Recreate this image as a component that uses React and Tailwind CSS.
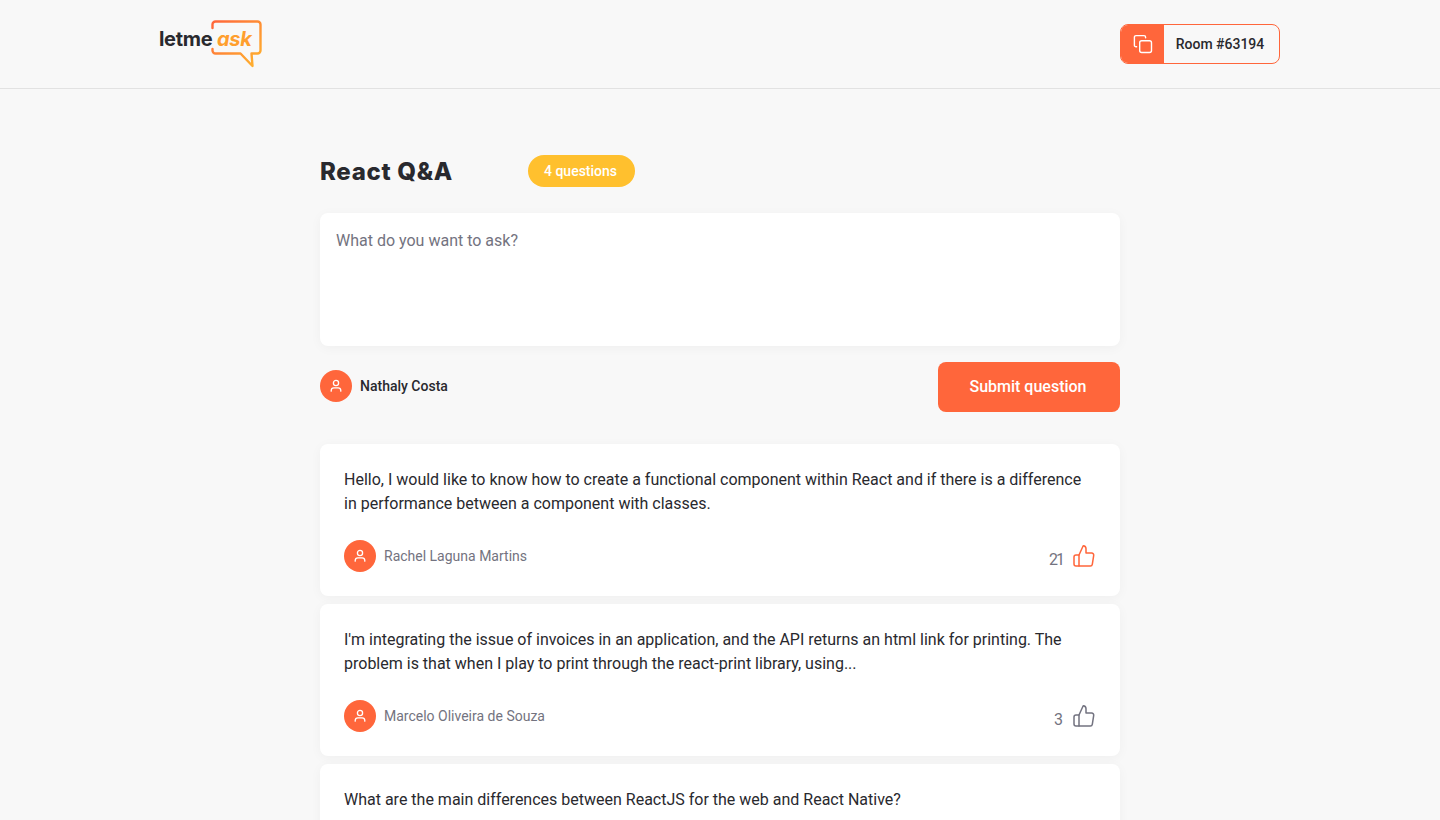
import React from "react";

const sans = "font-['Roboto',sans-serif]";

function UserAvatar() {
  return (
    <span className="flex h-8 w-8 shrink-0 items-center justify-center rounded-full bg-[#ff663b]">
      <svg width="16" height="16" viewBox="0 0 16 16" fill="none" stroke="#fff" strokeWidth="1.3" strokeLinecap="round" strokeLinejoin="round">
        <circle cx="8" cy="5" r="2.6" />
        <path d="M3.2 13.2v-.7c0-1.5 1.2-2.7 2.7-2.7h4.2c1.5 0 2.7 1.2 2.7 2.7v.7" />
      </svg>
    </span>
  );
}

function Thumb({ color }) {
  return (
    <svg width="24" height="24" viewBox="0 0 24 24" fill="none" stroke={color} strokeWidth="1.5" strokeLinecap="round" strokeLinejoin="round">
      <path d="M7 22H4a2 2 0 0 1-2-2v-7a2 2 0 0 1 2-2h3" />
      <path d="M7 22V11l4.2-9.2A3 3 0 0 1 14 4.8V9h5.7a2 2 0 0 1 2 2.3l-1.4 9a2 2 0 0 1-2 1.7H7Z" />
    </svg>
  );
}

function Question({ text, author, likes, liked }) {
  return (
    <article className="flex h-[152px] flex-col justify-between rounded-lg bg-white p-6 shadow-[0_2px_12px_rgba(0,0,0,0.04)]">
      <p className="text-base leading-6 text-[#29292e]">{text}</p>
      <footer className="flex items-center justify-between">
        <div className="flex items-center gap-2">
          <UserAvatar />
          <span className="text-sm text-[#737380]">{author}</span>
        </div>
        <div className={liked ? "flex items-end gap-[9px]" : "flex items-end gap-[10px]"}>
          <span className={liked ? "text-base leading-4 tracking-[-2px] text-[#737380]" : "text-base leading-4 tracking-[-1px] text-[#737380]"}>{likes}</span>
          <Thumb color={liked ? "#ff663b" : "#737380"} />
        </div>
      </footer>
    </article>
  );
}

export default function App() {
  return (
    <div className={`h-screen overflow-hidden bg-[#f8f8f8] ${sans}`}>
      <header className="h-[89px] border-b border-[#e2e2e2]">
        <div className="mx-auto flex h-[88px] w-[1120px] items-center justify-between">
          <div className="relative h-[48px] w-[102px]">
            <svg className="absolute left-[51px] top-0" width="52" height="48" viewBox="0 0 52 48" fill="none" strokeWidth="2.4" strokeLinejoin="round" strokeLinecap="round">
              <defs>
                <linearGradient id="lg" x1="0" y1="0" x2="1" y2="1">
                  <stop offset="0" stopColor="#ff663b" />
                  <stop offset="1" stopColor="#ffb52e" />
                </linearGradient>
              </defs>
              <path stroke="url(#lg)" d="M1.5 8V4.5a3 3 0 0 1 3-3h42a3 3 0 0 1 3 3v26a3 3 0 0 1-3 3H40.5L41.5 46 29.5 33.5H4.5a3 3 0 0 1-3-3V29" />
            </svg>
            <span className="absolute left-[-1px] top-[8px] font-['Inter',sans-serif] text-[20px] font-bold leading-[22px] tracking-[-0.3px] text-[#29292e]">letme</span>
            <span className="absolute left-[57px] top-[8px] font-['Inter',sans-serif] text-[20px] font-bold italic leading-[22px] tracking-[-0.3px] text-[#ff9f2e]">ask</span>
          </div>
          <div className="flex h-10 w-40 overflow-hidden rounded-lg border border-[#ff663b]">
            <span className="flex w-[43px] items-center justify-center bg-[#ff663b]">
              <svg width="20" height="20" viewBox="0 0 20 20" fill="none" stroke="#fff" strokeWidth="1.4" strokeLinecap="round" strokeLinejoin="round">
                <rect x="6.7" y="6.7" width="11.8" height="11.8" rx="2" />
                <path d="M3.6 12.8H3a1.6 1.6 0 0 1-1.6-1.6V3.2A1.6 1.6 0 0 1 3 1.6h8a1.6 1.6 0 0 1 1.6 1.6v.6" />
              </svg>
            </span>
            <span className="flex flex-1 items-center justify-center pr-[3px] text-sm font-medium text-[#29292e]">Room #63194</span>
          </div>
        </div>
      </header>

      <main className="mx-auto w-[800px]">
        <div className="mt-[66px] flex h-8 items-center">
          <h1 className="w-[208px] pt-px font-['Inter',sans-serif] text-2xl font-extrabold tracking-[0.7px] text-[#29292e]">React Q&amp;A</h1>
          <span className="flex h-8 items-center rounded-full bg-[#ffc02e] pl-4 pr-[18px] text-sm font-medium text-white">4 questions</span>
        </div>

        <form className="mt-[26px]">
          <textarea
            placeholder="What do you want to ask?"
            className="block h-[133px] w-full resize-none rounded-lg bg-white p-4 text-base leading-6 text-[#29292e] shadow-[0_2px_12px_rgba(0,0,0,0.04)] outline-none placeholder:text-[#737380]"
          />
          <div className="mt-4 flex items-center justify-between">
            <div className="flex items-center gap-2 pb-[2px]">
              <UserAvatar />
              <span className="text-sm font-medium text-[#29292e]">Nathaly Costa</span>
            </div>
            <button type="button" className="flex h-[50px] w-[182px] items-center justify-center rounded-lg bg-[#ff663b] pr-[2px] text-base font-medium text-white">
              Submit question
            </button>
          </div>
        </form>

        <div className="mt-8 flex flex-col gap-2">
          <Question
            text="Hello, I would like to know how to create a functional component within React and if there is a difference in performance between a component with classes."
            author="Rachel Laguna Martins"
            likes="21"
            liked
          />
          <Question
            text="I'm integrating the issue of invoices in an application, and the API returns an html link for printing. The problem is that when I play to print through the react-print library, using..."
            author="Marcelo Oliveira de Souza"
            likes="3"
          />
          <article className="h-[152px] rounded-lg bg-white p-6 shadow-[0_2px_12px_rgba(0,0,0,0.04)]">
            <p className="text-base leading-6 text-[#29292e]">What are the main differences between ReactJS for the web and React Native?</p>
          </article>
        </div>
      </main>
    </div>
  );
}
